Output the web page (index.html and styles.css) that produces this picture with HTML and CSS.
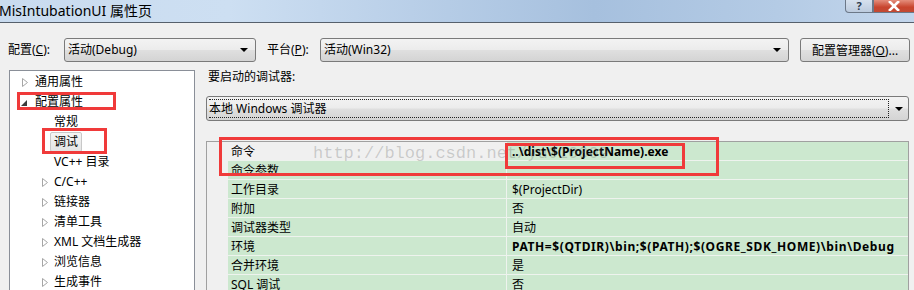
FILE: index.html
```html
<!DOCTYPE html>
<html>
<head>
    <meta charset="utf-8">
    <link rel="stylesheet" href="styles.css">
</head>
<body>
<div class="window">
    <div class="titlebar">
        <span class="title">MisIntubationUI 属性页</span>
        <div class="caption-buttons">
            <span class="cap help">?</span>
            <span class="cap close">
                <svg width="14" height="10" viewBox="0 0 14 10"><path d="M2 0 L12 10 M12 0 L2 10" stroke="#fff" stroke-width="2.6" fill="none"/></svg>
            </span>
        </div>
    </div>

    <div class="toolbar">
        <span class="label config-label">配置(<u>C</u>):</span>
        <div class="combo config">活动(Debug)<span class="arrow"></span></div>
        <span class="label platform-label">平台(<u>P</u>):</span>
        <div class="combo platform">活动(Win32)<span class="arrow"></span></div>
        <button class="manager">配置管理器(<u>O</u>)...</button>
    </div>

    <div class="main">
        <ul class="tree">
            <li class="lvl0"><svg class="tri" width="6" height="9"><path d="M0.5 0.5 L5.5 4.5 L0.5 8.5 Z" fill="none" stroke="#a6a6a6"/></svg>通用属性</li>
            <li class="lvl0"><svg class="tri open" width="6" height="6"><path d="M6 0 L6 6 L0 6 Z" fill="#3c3c3c"/></svg>配置属性</li>
            <li class="lvl1">常规</li>
            <li class="lvl1"><span class="selected">调试</span></li>
            <li class="lvl1">VC++ 目录</li>
            <li class="lvl1"><svg class="tri" width="6" height="9"><path d="M0.5 0.5 L5.5 4.5 L0.5 8.5 Z" fill="none" stroke="#a6a6a6"/></svg>C/C++</li>
            <li class="lvl1"><svg class="tri" width="6" height="9"><path d="M0.5 0.5 L5.5 4.5 L0.5 8.5 Z" fill="none" stroke="#a6a6a6"/></svg>链接器</li>
            <li class="lvl1"><svg class="tri" width="6" height="9"><path d="M0.5 0.5 L5.5 4.5 L0.5 8.5 Z" fill="none" stroke="#a6a6a6"/></svg>清单工具</li>
            <li class="lvl1"><svg class="tri" width="6" height="9"><path d="M0.5 0.5 L5.5 4.5 L0.5 8.5 Z" fill="none" stroke="#a6a6a6"/></svg>XML 文档生成器</li>
            <li class="lvl1"><svg class="tri" width="6" height="9"><path d="M0.5 0.5 L5.5 4.5 L0.5 8.5 Z" fill="none" stroke="#a6a6a6"/></svg>浏览信息</li>
            <li class="lvl1"><svg class="tri" width="6" height="9"><path d="M0.5 0.5 L5.5 4.5 L0.5 8.5 Z" fill="none" stroke="#a6a6a6"/></svg>生成事件</li>
        </ul>

        <div class="page">
            <div class="caption">要启动的调试器:</div>
            <div class="combo debugger"><span class="focus">本地 Windows 调试器</span><span class="arrow"></span></div>

            <div class="grid">
                <div class="row current"><span class="gutter"></span><span class="name">命令</span><span class="value bold">..\dist\$(ProjectName).exe</span></div>
                <div class="row"><span class="gutter"></span><span class="name">命令参数</span><span class="value"></span></div>
                <div class="row"><span class="gutter"></span><span class="name">工作目录</span><span class="value">$(ProjectDir)</span></div>
                <div class="row"><span class="gutter"></span><span class="name">附加</span><span class="value">否</span></div>
                <div class="row"><span class="gutter"></span><span class="name">调试器类型</span><span class="value">自动</span></div>
                <div class="row"><span class="gutter"></span><span class="name">环境</span><span class="value bold wide">PATH=$(QTDIR)\bin;$(PATH);$(OGRE_SDK_HOME)\bin\Debug</span></div>
                <div class="row"><span class="gutter"></span><span class="name">合并环境</span><span class="value">是</span></div>
                <div class="row"><span class="gutter"></span><span class="name">SQL 调试</span><span class="value">否</span></div>
            </div>
        </div>
    </div>

    <div class="watermark">http://blog.csdn.net/yu010009</div>
    <div class="mark mark-config"></div>
    <div class="mark mark-debug"></div>
    <div class="mark mark-command"></div>
    <div class="mark mark-value"></div>
</div>
</body>
</html>
```

FILE: styles.css
```css
html,
body {
    margin: 0;
    padding: 0;
    background: #f0f0f0;
    font-family: "Noto Sans", "Noto Sans CJK SC", sans-serif;
    font-size: 12px;
    color: #000;
    width: 914px;
    height: 290px;
    overflow: hidden;
}

.window {
    position: relative;
    height: 290px;
}

.titlebar {
    height: 22px;
    display: flex;
    border-bottom: 1px solid #56606c;
    background: linear-gradient(to right, #c9dbef 0%, #cddff2 25%, #b9cfe8 45%, #a6c0de 65%, #b4cbe5 85%, #c3d6ec 100%);

    & .title {
        font-size: 14px;
        line-height: 21px;
        margin-left: -1px;
    }
}

.caption-buttons {
    margin-left: auto;
    display: flex;
    height: 13px;

    & .cap {
        display: flex;
        align-items: center;
        justify-content: center;
        border: 1px solid #6c7888;
        border-top: none;
        box-sizing: border-box;
    }

    & .help {
        width: 28px;
        border-radius: 0 0 0 4px;
        background: linear-gradient(#d6e1ee, #bccbde);
        color: #2e3c4e;
        font-weight: bold;
        font-size: 11px;
        line-height: 12px;
    }

    & .close {
        width: 41px;
        border-right: none;
        background: linear-gradient(#e48e7c, #c8452e 60%, #c24a34);
    }
}

.toolbar {
    display: flex;
    align-items: center;
    height: 24px;
    margin-top: 15px;
    padding-left: 8px;

    & .label {
        line-height: 16px;
    }

    & .config-label {
        width: 56px;
    }

    & .platform-label {
        width: 53px;
        margin-left: 11px;
    }
}

.combo {
    position: relative;
    box-sizing: border-box;
    height: 24px;
    line-height: 22px;
    padding-left: 3px;
    border: 1px solid #7a7a7a;
    border-radius: 3px;
    background: linear-gradient(#f3f3f3 0%, #ececec 48%, #dfdfdf 52%, #d4d4d4 100%);

    & .arrow {
        position: absolute;
        right: 7px;
        top: 9px;
        width: 0;
        height: 0;
        border-left: 4px solid transparent;
        border-right: 4px solid transparent;
        border-top: 4px solid #000;
    }
}

.config {
    width: 192px;
}

.platform {
    width: 469px;
}

.manager {
    box-sizing: border-box;
    width: 110px;
    height: 24px;
    margin-left: 11px;
    padding: 0;
    font: inherit;
    color: #000;
    border: 1px solid #7a7a7a;
    border-radius: 3px;
    background: linear-gradient(#f3f3f3 0%, #ececec 48%, #dfdfdf 52%, #d4d4d4 100%);
}

.main {
    display: flex;
    margin-top: 8px;
    padding-left: 9px;
}

.tree {
    list-style: none;
    margin: 0;
    padding: 1px 0 0;
    box-sizing: border-box;
    width: 186px;
    height: 240px;
    background: #fff;
    border: 1px solid #8a8f98;

    & li {
        position: relative;
        height: 20px;
        line-height: 20px;
        display: flex;
        align-items: center;
    }

    & .lvl0 {
        padding-left: 25px;
    }

    & .lvl1 {
        padding-left: 44px;
    }

    & .tri {
        position: absolute;
        top: 6px;
    }

    & .lvl0 .tri {
        left: 12px;
    }

    & .lvl1 .tri {
        left: 32px;
    }

    & .tri.open {
        top: 8px;
        left: 11px;
    }

    & .selected {
        margin-left: -4px;
        padding: 0 3px;
        height: 18px;
        line-height: 18px;
        border: 1px solid #c8c8c8;
        border-radius: 2px;
        background: linear-gradient(#f4f4f4, #e4e4e4);
    }
}

.page {
    margin-left: 11px;
    width: 703px;

    & .caption {
        line-height: 14px;
        padding-left: 2px;
    }
}

.debugger {
    width: 703px;
    height: 25px;
    margin-top: 12px;
    padding: 2px;

    & .focus {
        display: block;
        box-sizing: border-box;
        height: 19px;
        line-height: 17px;
        width: 680px;
        border: 1px dotted #222;
        border-left: none;
    }

    & .arrow {
        top: 10px;
        right: 5px;
    }
}

.grid {
    margin-top: 20px;
    border: 1px solid #a0a0a0;
    border-bottom: none;
    height: 160px;
    background: #f0f0f0;

    & .row {
        display: flex;
        height: 19px;
    }

    & .gutter {
        width: 21px;
        flex: none;
    }

    & .name,
    & .value {
        box-sizing: border-box;
        height: 19px;
        padding-top: 1px;
        line-height: 17px;
        background: #cce8cf;
        border-bottom: 1px solid #eef3ee;
        white-space: nowrap;
    }

    & .name {
        width: 279px;
        padding-left: 3px;
        border-right: 1px solid #eef3ee;
    }

    & .value {
        flex: 1;
        padding-left: 5px;
    }

    & .current .name {
        background: #f0f0f0;
    }

    & .bold {
        font-weight: bold;
    }

    & .wide {
        letter-spacing: 0.6px;
    }
}

.watermark {
    position: absolute;
    left: 313px;
    top: 145px;
    font-family: "Liberation Mono", monospace;
    font-size: 17px;
    line-height: 18px;
    color: rgba(100, 100, 100, 0.28);
    pointer-events: none;
}

.mark {
    position: absolute;
    box-sizing: border-box;
    border: 3px solid #f03a3a;
}

.mark-config {
    left: 17px;
    top: 92px;
    width: 99px;
    height: 18px;
}

.mark-debug {
    left: 42px;
    top: 128px;
    width: 65px;
    height: 26px;
}

.mark-command {
    left: 219px;
    top: 137px;
    width: 500px;
    height: 39px;
}

.mark-value {
    left: 505px;
    top: 143px;
    width: 180px;
    height: 26px;
}
```
